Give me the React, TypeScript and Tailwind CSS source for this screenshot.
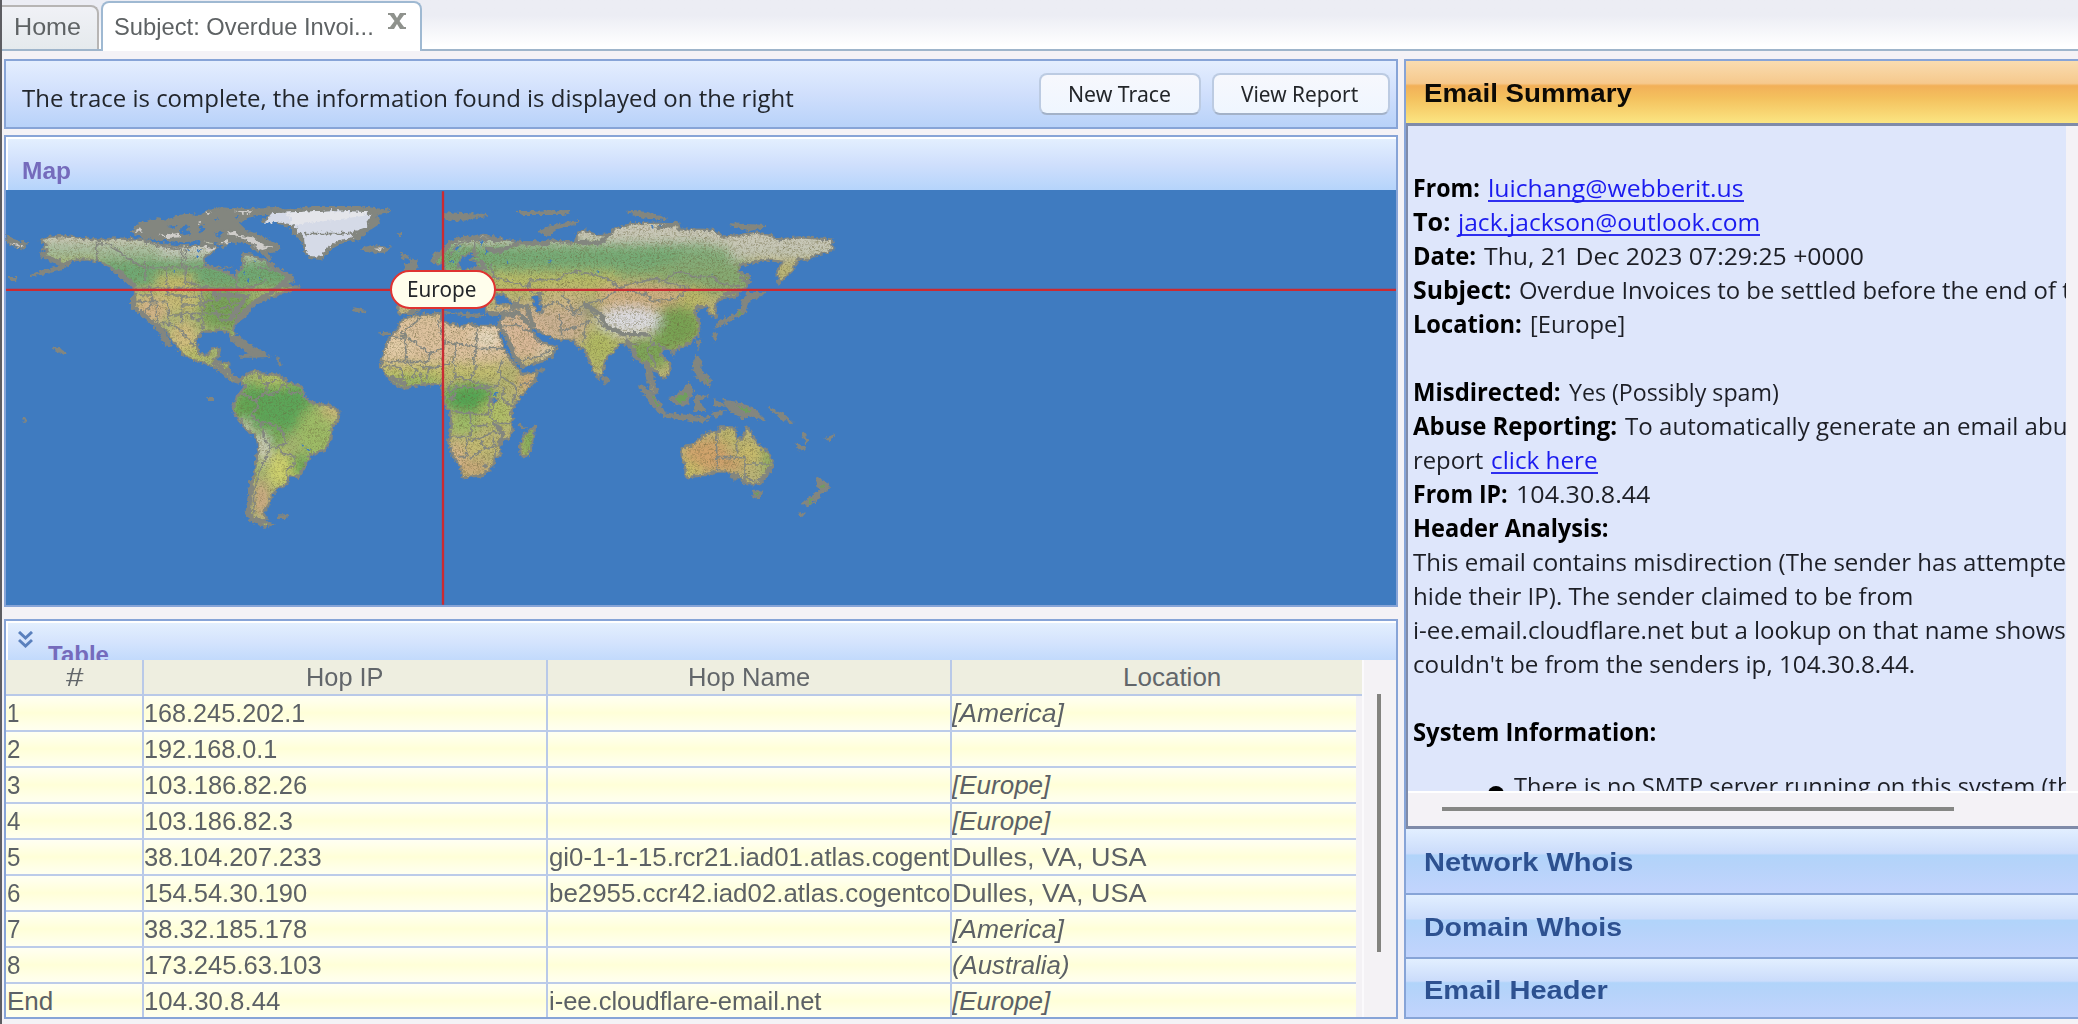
import { useLayoutEffect, useRef, useState } from "react";
import type { ReactNode } from "react";

/** Text on a single line, condensed or widened so that it spans exactly `w` pixels. */
function Fit({ w, className = "", children }: { w: number; className?: string; children: ReactNode }) {
  const ref = useRef<HTMLSpanElement>(null);
  const [scale, setScale] = useState(1);
  useLayoutEffect(() => {
    if (ref.current && ref.current.offsetWidth > 0) setScale(w / ref.current.offsetWidth);
  }, [w]);
  return (
    <span className={`block shrink-0 whitespace-pre ${className}`} style={{ width: w }}>
      <span ref={ref} className="inline-block origin-left" style={{ transform: `scaleX(${scale})` }}>
        {children}
      </span>
    </span>
  );
}

const AMERICAS = [
  "M120,180L150,170L190,168L260,175L300,180L350,175L400,178L430,180L470,190L500,195L540,200L600,195L615,180L635,185L650,205L612,235L612,252L640,265L690,280L708,297L715,275L728,262L730,222L760,225L775,235L800,245L830,262L840,275L870,285L880,305L850,318L898,320L845,340L800,355L778,365L750,385L740,405L712,425L700,440L705,470L705,485L692,475L685,455L660,448L640,455L610,455L590,475L588,495L600,522L625,525L635,508L660,505L655,530L640,540L665,548L688,550L685,580L700,595L720,600L715,608L690,600L668,578L640,560L610,548L580,540L545,520L530,498L515,480L500,455L480,440L500,480L508,498L495,490L475,450L460,430L430,405L405,380L405,330L390,310L375,298L350,280L330,260L290,243L260,238L220,240L185,252L170,250L150,235L125,230L145,215L125,205L140,195Z",
  "M720,600L745,580L765,572L785,580L835,585L860,605L905,620L915,655L950,672L990,675L1018,695L1015,720L995,745L990,785L975,808L930,825L920,850L895,890L865,890L862,912L835,925L815,945L808,970L790,1000L800,1015L780,1020L820,1032L795,1040L760,1025L740,1010L742,975L755,920L765,870L775,800L770,770L740,750L715,715L698,688L710,650L735,620Z",
];

const OLD_WORLD = [
  "M62,470L85,445L85,435L105,415L140,405L200,402L217,405L215,425L240,432L280,440L295,430L320,438L385,438L392,450L385,455L400,500L415,530L440,560L455,582L500,578L498,600L470,630L440,665L425,690L428,745L420,770L390,790L392,825L375,832L370,855L340,885L300,890L278,892L270,860L250,830L235,785L245,740L240,700L225,670L218,640L215,615L180,612L150,615L110,622L90,622L60,600L32,560L40,515Z",
  "M495,740L490,780L475,828L452,828L450,800L462,765Z",
  "M388,430L400,405L440,395L470,420L485,455L510,485L530,490L560,500L545,530L510,545L460,562L445,540L425,500L400,460Z",
  "M185,245L190,225L215,215L240,190L265,172L310,170L340,165L400,180L440,185L500,190L540,180L620,190L620,160L640,150L680,165L720,165L735,145L790,130L860,128L925,130L925,148L1030,150L1060,170L1110,165L1160,158L1200,165L1220,178L1290,172L1385,178L1390,210L1340,225L1310,240L1285,235L1270,270L1225,310L1222,270L1240,245L1190,240L1160,245L1110,255L1105,275L1140,290L1130,320L1095,350L1050,355L1035,375L1040,410L1020,405L1010,378L975,385L975,400L990,430L985,465L950,495L910,510L880,505L870,520L900,550L902,575L880,595L860,575L840,565L835,590L860,640L850,640L832,600L825,550L805,540L795,510L770,495L750,490L745,500L705,540L700,570L685,598L670,570L655,535L645,510L625,500L610,480L560,478L530,465L490,445L470,430L445,400L400,405L350,396L345,372L130,372L150,300L225,300L225,250L200,250Z",
  "M85,375L150,378L145,395L105,402L85,400Z",
  "M935,805L975,790L1000,765L1035,752L1045,760L1050,742L1095,742L1100,770L1115,780L1130,740L1148,765L1160,790L1195,820L1210,850L1195,885L1170,912L1125,912L1115,895L1090,895L1075,875L1040,875L1000,885L948,893L945,855L935,830Z",
];

const NORTH_ISLANDS =
  "M670,160L700,150L760,160L800,180L832,195L835,210L800,215L812,242L780,215L760,205L745,190L720,185L690,185L670,200L655,190Z M395,155L420,130L470,118L500,122L540,108L560,104L600,108L630,92L660,85L700,88L830,84L850,92L800,98L740,112L715,130L735,150L690,150L640,155L660,185L600,180L550,184L500,180L440,175L410,162Z M1090,205L1120,198L1168,205L1150,215L1110,215Z M690,470L722,472L745,495L805,528L765,530L720,530L755,520L705,492Z M835,532L842,558L835,550Z M835,1006L862,1006L860,1014L838,1014Z M20,165L40,180L80,192L70,205L25,190Z M90,285L150,268L215,246L185,265L140,280Z M30,294L48,294L46,300L32,300Z M156,503L180,508L198,522L185,518Z M625,654L636,654L636,660L626,660Z M1195,160L1205,163L1198,167Z M1062,385L1092,392L1080,396Z M72,712L78,722L74,722Z";

const EAST_ISLANDS =
  "M105,255L125,250L118,235L140,245L135,272L108,270Z M95,222L110,232L100,236Z M1040,440L1055,418L1095,405L1115,385L1118,362L1130,348L1130,332L1150,340L1188,338L1145,358L1130,370L1125,400L1100,410L1065,430Z M808,618L830,625L870,670L885,700L865,695L835,655Z M878,700L950,708L1000,715L1025,708L1000,725L950,718L885,710Z M902,655L930,640L955,612L970,630L950,675L915,670Z M975,648L1008,650L988,662L1002,690L976,690Z M980,528L994,545L990,570L1022,598L1015,618L985,596L970,565Z M1060,662L1100,668L1150,685L1185,722L1140,705L1120,712L1080,690Z M697,588L717,600L705,612Z M1198,682L1240,703L1268,730L1235,715Z M1150,932L1176,935L1165,955L1150,948Z M1340,893L1378,915L1370,932L1348,935Z M1350,935L1345,955L1312,978L1298,970L1325,950Z M222,100L350,105L300,115L265,122L225,115Z M450,96L600,93L580,102L460,102Z M508,155L545,138L628,126L560,145L535,165Z M770,95L830,98L892,118L820,112Z M1080,133L1190,138L1130,152Z M1296,755L1315,785L1308,786Z M1282,795L1305,800L1295,810Z M1370,775L1390,767L1380,780Z M905,512L916,512L908,526Z M980,480L990,482L984,500Z M1030,460L1040,462L1034,478Z M1290,1000L1300,1003L1294,1010Z M500,568L525,568L512,574Z M445,732L465,744L455,744Z M25,460L60,458L50,464Z M1035,660L1035,680L1060,675Z M1030,700L1060,695L1040,712Z M195,396L285,402L345,405L300,410L240,398Z";

const AMERICAN_BORDERS =
  "M290,178V243 M290,190L330,195L370,225L400,245L430,262 M430,180L460,195L545,208V262 M430,262H700 M435,240V300 M500,262V318 M556,205V318 M556,300L600,318L640,325L715,325L760,320L800,300 M710,270V325 M770,262L835,272 M405,325H620 M455,325V365 M405,365H500 M500,325V345 M500,345H545V400H600 M545,350H600V385 M545,375H610 M470,365V430 M505,365V435 M455,430H510L540,450L570,480L580,500 M505,405H545 M545,400V430 M575,400L580,418L605,420 M600,325L615,370L605,400L610,450 M605,370L640,360 M610,400L720,405 M635,375L660,420L690,420 M640,340L650,360L680,340L690,370L740,370 M660,385L690,380L700,400 M430,405L455,370 M420,345H455 M720,640L765,660L780,650L800,640L800,605 M780,645L830,640L850,610 M860,610L870,640L910,640 M765,660L775,680L755,700L760,715L785,730L800,725L845,750L860,790L830,800L810,805 M785,730L790,770L800,785L810,805L795,840L775,880L765,930L760,1010 M830,800L850,820L885,830L880,860L860,865V888 M770,575L790,610L830,600";

const OLD_BORDERS =
  "M62,470L105,475L110,545H45 M105,475L95,455L140,425L150,408 M95,460L180,520L175,545L110,545 M180,520L218,505L225,490L205,430L215,405 M225,490L255,490L320,500V438 M320,505H400 M255,490L260,510L250,545L255,590L300,600L320,560L310,540L320,500 M250,545L215,560L175,565L170,600 M110,545L140,570L125,600 M150,575L155,610 M40,560L90,560L100,600 M180,565L150,560 M255,590L235,620L240,640L260,620L350,625L360,640L355,700L330,705L300,700L245,695 M300,600L350,620L380,620L395,590L385,570L400,540 M395,590L440,620L495,600 M400,620L398,660L430,680 M440,620L430,670 M360,640L370,680L360,710L390,730H425 M245,770H300L305,740L355,735 M300,700L305,740 M290,775L290,830H265 M290,780L330,775L370,755L395,765 M330,780L345,805L300,835 M345,805L375,800V830 M370,770L375,800 M345,850L352,856L342,862Z M400,410L385,440 M400,440L440,435L490,460 M420,420L440,410 M440,555L450,540L510,530L540,510 M470,320L480,300L570,298L580,285L620,275L680,285L730,305L745,325 M480,300L475,330L520,345 M575,345L600,370L610,400L650,370L700,360L740,330 M520,380L560,365L610,400 M745,325L790,310L860,295L880,305L910,280L935,275L970,290L1030,290L1050,310L1110,320 M745,325L830,345L850,365L920,355L960,325L880,305 M360,250L370,290L440,310L470,320 M320,170L310,215L335,245 M240,225L265,190L310,180 M570,400L575,470 M575,450L610,445L660,420 M610,405L640,400 M660,420L645,440L640,490 M660,390L700,440L750,460L830,460L850,490L830,510L860,560 M770,470V495L800,490 M850,490L880,500 M380,400L440,385L450,350 M440,370L490,375 M1040,755V870 M1040,833H1125V910 M1100,770V833 M1125,852H1205 M1125,890L1150,902L1185,900";

function WorldMap() {
  return (
    <svg viewBox="12 30 4182 1248" className="block h-full w-full" aria-label="World map">
      <defs>
        <filter id="coast" x="0" y="0" width="100%" height="100%" colorInterpolationFilters="sRGB">
          <feTurbulence type="fractalNoise" baseFrequency="0.09" numOctaves="2" seed="7" result="n" />
          <feDisplacementMap in="SourceGraphic" in2="n" scale="18" xChannelSelector="R" yChannelSelector="G" />
        </filter>
        <filter id="soft" x="-40%" y="-40%" width="180%" height="180%">
          <feGaussianBlur stdDeviation="16" />
        </filter>
        <filter id="speckle" x="0" y="0" width="100%" height="100%" colorInterpolationFilters="sRGB">
          <feTurbulence type="fractalNoise" baseFrequency="0.2" numOctaves="2" seed="3" />
          <feColorMatrix values="0 0 0 0 0.42  0 0 0 0 0.4  0 0 0 0 0.25  0 2.2 0 0 -1" />
        </filter>
        <clipPath id="americas">
          {AMERICAS.map((d) => <path key={d} d={d} />)}
        </clipPath>
        <clipPath id="oldworld">
          {OLD_WORLD.map((d) => <path key={d} d={d} />)}
        </clipPath>
      </defs>

      <g filter="url(#coast)">
        <g clipPath="url(#americas)">
          <rect x="0" y="100" width="1100" height="960" fill="#a4b472" />
          <g filter="url(#soft)">
            <rect x="90" y="140" width="800" height="50" fill="#ccc8b8" />
            <rect x="90" y="190" width="800" height="45" fill="#a5bc9d" />
            <rect x="480" y="180" width="160" height="50" fill="#c8cbc0" />
            <rect x="720" y="215" width="80" height="45" fill="#cfccc0" />
            <rect x="300" y="238" width="600" height="85" fill="#6fa873" />
            <rect x="470" y="285" width="110" height="40" fill="#c8bd6c" />
            <rect x="400" y="335" width="200" height="60" fill="#c9bd77" />
            <ellipse cx="450" cy="395" rx="55" ry="40" fill="#d0b287" />
            <ellipse cx="680" cy="390" rx="85" ry="60" fill="#77a35a" />
            <ellipse cx="550" cy="470" rx="45" ry="50" fill="#d2bd80" />
            <ellipse cx="580" cy="525" rx="50" ry="20" fill="#b9bd69" />
            <ellipse cx="820" cy="680" rx="120" ry="85" fill="#5ba558" />
            <ellipse cx="735" cy="690" rx="40" ry="45" fill="#64a553" />
            <ellipse cx="950" cy="760" rx="60" ry="80" fill="#9dbb66" />
            <ellipse cx="1000" cy="690" rx="35" ry="30" fill="#c9b87a" />
            <ellipse cx="820" cy="600" rx="60" ry="20" fill="#b6c268" />
            <ellipse cx="820" cy="770" rx="35" ry="35" fill="#74aa56" />
            <ellipse cx="900" cy="860" rx="40" ry="35" fill="#6fa95a" />
            <ellipse cx="840" cy="870" rx="38" ry="55" fill="#ced06d" />
            <ellipse cx="785" cy="960" rx="25" ry="60" fill="#cfa984" />
            <ellipse cx="790" cy="800" rx="18" ry="45" fill="#d8d3cc" />
            <ellipse cx="735" cy="740" rx="20" ry="20" fill="#d3cfbf" />
          </g>
          <rect x="20" y="100" width="1100" height="950" filter="url(#speckle)" opacity="0.6" />
        </g>
        <g fill="none" stroke="#83867f" strokeWidth="7" strokeLinejoin="round">
          {AMERICAS.map((d) => <path key={d} d={d} />)}
          <path d={AMERICAN_BORDERS} strokeWidth="5" />
        </g>
        <path
          d="M400,345V380L480,445L510,500 M350,270L405,320 M640,545L715,602 M755,900L745,1005L790,1035 M800,250L870,290L850,310L800,345L745,380L710,425 M640,340L740,350L690,420 M120,220L180,250 M600,190L640,200"
          fill="none" stroke="#83867f" strokeWidth="14"
        />
        <path d={NORTH_ISLANDS} fill="#83867f" stroke="#83867f" strokeWidth="6" />
        <path
          d="M400,155L420,142L428,155Z M470,160L500,165L530,160L545,172L500,174Z M680,158L700,153L720,168L760,172L790,195L820,200L780,212L760,192L730,176Z M615,98L632,97L625,106Z M700,92L760,94L740,100Z M1120,206L1150,205L1140,212Z M25,190L70,196L65,202Z M610,200L650,205L625,215Z M660,190L680,178L690,190Z M590,128L605,126L600,134Z"
          fill="#cfcdca"
        />
        <path
          d="M700,112L720,108L715,118Z M540,150L550,138L570,135L560,150L575,160L560,168L545,162Z M600,140L612,132L608,160L595,165Z M500,140L530,138L525,146Z M640,118L655,112L650,122Z"
          fill="#3f7bc0"
        />
        <path d="M780,88L860,90L940,80L1080,80L1175,92L1130,105L1138,130L1100,155L1080,178L1030,185L995,205L965,238L935,235L915,220L910,190L880,160L870,140L820,125L785,125L810,105Z" fill="#83867f" stroke="#83867f" strokeWidth="4" />
        <path d="M815,100L960,93L1000,90L1100,97L1112,108L1100,125L1102,140L1050,158L1060,172L1010,182L980,205L960,230L925,228L918,200L915,175L895,155L880,135L840,125L795,128Z" fill="#d5dae7" />
        <path d="M880,135L1000,120L1090,108L1100,97L960,93L860,98Z" fill="#e4e5ea" />
        <path d="M915,161H1080" stroke="#83867f" strokeWidth="5" />
        <path
          d="M560,205L570,208L562,216Z M590,210L606,208L600,218Z M585,225L598,222L592,234Z M520,270L528,272L522,280Z M740,300L748,298L745,310Z M780,290L786,292L780,300Z M905,790L915,795L908,800Z M918,805L930,808L925,814Z M760,240L768,244L762,250Z M730,275L736,277L732,284Z"
          fill="#3f7bc0"
        />
      </g>

      <g transform="translate(1110 0)" filter="url(#coast)">
        <g clipPath="url(#oldworld)">
          <rect x="0" y="90" width="1420" height="880" fill="#b9b377" />
          <g filter="url(#soft)">
            <rect x="160" y="100" width="1260" height="100" fill="#c9c7b8" />
            <rect x="160" y="190" width="860" height="90" fill="#76ab76" />
            <ellipse cx="1020" cy="235" rx="100" ry="38" fill="#83ae7c" />
            <rect x="1080" y="195" width="320" height="45" fill="#c3c5b4" />
            <rect x="870" y="250" width="280" height="90" fill="#86a972" />
            <rect x="370" y="275" width="370" height="60" fill="#b9bc68" />
            <rect x="740" y="275" width="160" height="25" fill="#93ad6e" />
            <rect x="380" y="375" width="270" height="110" fill="#cbb193" />
            <rect x="520" y="330" width="120" height="50" fill="#cbb884" />
            <rect x="690" y="318" width="250" height="70" fill="#cfb083" />
            <ellipse cx="920" cy="440" rx="75" ry="65" fill="#78a253" />
            <ellipse cx="778" cy="422" rx="95" ry="42" fill="#dcdbe0" />
            <ellipse cx="970" cy="350" rx="45" ry="30" fill="#bdb967" />
            <ellipse cx="690" cy="500" rx="55" ry="60" fill="#b1b963" />
            <ellipse cx="830" cy="520" rx="80" ry="45" fill="#7da558" />
            <ellipse cx="650" cy="390" rx="30" ry="20" fill="#969a80" />
            <ellipse cx="460" cy="480" rx="75" ry="60" fill="#d9b898" />
            <ellipse cx="530" cy="520" rx="25" ry="20" fill="#e3d3bb" />
            <rect x="20" y="400" width="380" height="150" fill="#ddc19e" />
            <ellipse cx="350" cy="475" rx="40" ry="30" fill="#e7dac1" />
            <ellipse cx="80" cy="500" rx="50" ry="25" fill="#e5cfaa" />
            <rect x="20" y="555" width="370" height="35" fill="#c3c16c" />
            <ellipse cx="120" cy="608" rx="100" ry="18" fill="#8bb35e" />
            <ellipse cx="300" cy="655" rx="80" ry="45" fill="#55a553" />
            <ellipse cx="430" cy="600" rx="45" ry="30" fill="#b4b56f" />
            <ellipse cx="475" cy="605" rx="35" ry="30" fill="#d0aa7e" />
            <ellipse cx="380" cy="700" rx="50" ry="45" fill="#b0bf68" />
            <ellipse cx="280" cy="735" rx="50" ry="30" fill="#9cbc66" />
            <ellipse cx="320" cy="800" rx="60" ry="25" fill="#c5bc72" />
            <ellipse cx="260" cy="830" rx="28" ry="45" fill="#d8b68b" />
            <ellipse cx="310" cy="865" rx="50" ry="25" fill="#cba97a" />
            <ellipse cx="480" cy="780" rx="30" ry="55" fill="#85ad5c" />
            <ellipse cx="1010" cy="825" rx="70" ry="50" fill="#d0a36c" />
            <ellipse cx="960" cy="870" rx="30" ry="25" fill="#c9c067" />
            <ellipse cx="1080" cy="770" rx="30" ry="25" fill="#c0b86c" />
            <ellipse cx="1080" cy="855" rx="45" ry="20" fill="#cd9e6b" />
            <ellipse cx="1140" cy="820" rx="35" ry="30" fill="#c9bb6b" />
            <ellipse cx="1195" cy="840" rx="15" ry="45" fill="#7fa95c" />
          </g>
          <rect x="0" y="90" width="1420" height="880" filter="url(#speckle)" opacity="0.7" />
        </g>
        <g fill="#3f7bc0" stroke="#83867f" strokeWidth="5">
          <path d="M375,345L400,340L420,362L440,372L400,375L375,368Z" />
          <path d="M485,352L510,345L512,370L520,395L505,400L492,380Z" />
          <path d="M275,230L300,218L320,222L300,240L325,245L320,262L280,272L262,260Z" />
          <path d="M360,655L385,655L380,668L362,668Z" />
        </g>
        <g fill="none" stroke="#83867f" strokeWidth="7" strokeLinejoin="round">
          {OLD_WORLD.map((d) => <path key={d} d={d} />)}
          <path d={OLD_BORDERS} strokeWidth="5" />
        </g>
        <path
          d="M190,245L240,190L270,175L390,180 M330,240L345,265L300,270 M345,205L385,215L440,190L540,190 M620,185L690,190L720,160 M640,370L690,400L710,440L760,462L830,463 M405,455L440,545 M420,380L470,380L490,440 M770,480L800,540 M830,540L860,640 M1060,345L1110,330 M1110,290L1140,310 M975,385L1000,380 M60,590L110,615 M370,730L400,760L385,800 M1170,905L1205,860 M1080,885L1110,885 M260,640L240,660 M150,390L110,398 M355,400L440,405 M925,130L860,145"
          fill="none" stroke="#83867f" strokeWidth="13"
        />
        <path d={EAST_ISLANDS} fill="#83867f" stroke="#83867f" strokeWidth="6" />
        <path
          d="M840,640L870,678L862,680Z M912,658L945,640L955,650L935,668Z M1095,675L1150,692L1130,700Z M1108,395L1118,398L1105,405Z M1352,915L1368,918L1355,925Z M1312,965L1330,955L1322,968Z M1155,938L1168,940L1160,948Z M1005,595L1016,600L1010,606Z"
          fill="#6f9f5c"
        />
        <path
          d="M255,205L275,195L262,212Z M330,180L340,190L332,200Z M345,205L355,215L345,222Z M240,240L252,242L245,252Z M410,240L420,250L412,252Z M535,243L545,245L536,250Z M680,272L688,278L680,280Z M840,135L855,142L848,146Z M865,136L880,136L870,140Z M1025,280L1032,282L1026,286Z M380,380L386,384L380,388Z M370,638L388,640L375,645Z M290,260L305,255L300,268Z"
          fill="#3f7bc0"
        />
      </g>

      <path d="M18,329.500H4188 M1329,34V1274" fill="none" stroke="#cb2a31" strokeWidth="7" />
    </svg>
  );
}

const HOPS: { n: string; nw: number; ip: string; ipw: number; name?: string; namew?: number; loc?: string; locw?: number; plain?: boolean }[] = [
  { n: "1", nw: 12, ip: "168.245.202.1", ipw: 161, loc: "[America]", locw: 112 },
  { n: "2", nw: 13, ip: "192.168.0.1", ipw: 133 },
  { n: "3", nw: 13, ip: "103.186.82.26", ipw: 163, loc: "[Europe]", locw: 98 },
  { n: "4", nw: 13, ip: "103.186.82.3", ipw: 149, loc: "[Europe]", locw: 98 },
  { n: "5", nw: 13, ip: "38.104.207.233", ipw: 178, name: "gi0-1-1-15.rcr21.iad01.atlas.cogent", namew: 400, loc: "Dulles, VA, USA", locw: 194, plain: true },
  { n: "6", nw: 13, ip: "154.54.30.190", ipw: 163, name: "be2955.ccr42.iad02.atlas.cogentco", namew: 401, loc: "Dulles, VA, USA", locw: 194, plain: true },
  { n: "7", nw: 13, ip: "38.32.185.178", ipw: 163, loc: "[America]", locw: 112 },
  { n: "8", nw: 13, ip: "173.245.63.103", ipw: 178, loc: "(Australia)", locw: 117 },
  { n: "End", nw: 46, ip: "104.30.8.44", ipw: 136, name: "i-ee.cloudflare-email.net", namew: 272, loc: "[Europe]", locw: 98 },
];

const COLS = "grid grid-cols-[138px_404px_404px_1fr]";

function HopTable() {
  return (
    <div className="flex h-[357px] bg-[#f4f2f5] font-['Liberation_Sans',sans-serif] text-[26px] text-[#5c6166]">
      <div className="w-[1356px] shrink-0">
        <div className={`${COLS} h-[36px] border-b-2 border-[#b9c9e8] bg-[#eeeee0] leading-[34px] text-[#62666a]`}>
          <div className="flex justify-center border-r-2 border-[#b9c9e8]"><Fit w={17}>#</Fit></div>
          <div className="flex justify-center border-r-2 border-[#b9c9e8]"><Fit w={78}>Hop IP</Fit></div>
          <div className="flex justify-center border-r-2 border-[#b9c9e8]"><Fit w={122}>Hop Name</Fit></div>
          <div className="flex justify-center pl-[30px]"><Fit w={98}>Location</Fit></div>
        </div>
        <div className="w-[1350px]">
          {HOPS.map((h) => (
            <div
              key={h.n}
              className={`${COLS} h-[36px] border-b-2 border-[#bccbe9] bg-linear-to-b from-[#fffff2] via-[#ffffd8] to-[#fffff0] leading-[35px] last:h-[34px] last:border-b-0`}
            >
              <div className="overflow-hidden border-r-2 border-[#b9c9e8] pl-px"><Fit w={h.nw}>{h.n}</Fit></div>
              <div className="overflow-hidden border-r-2 border-[#b9c9e8]"><Fit w={h.ipw}>{h.ip}</Fit></div>
              <div className="overflow-hidden border-r-2 border-[#b9c9e8] pl-px">{h.name && <Fit w={h.namew!}>{h.name}</Fit>}</div>
              <div className="overflow-hidden">{h.loc && <Fit w={h.locw!} className={h.plain ? "" : "italic"}>{h.loc}</Fit>}</div>
            </div>
          ))}
        </div>
      </div>
      <div className="flex flex-1 justify-center border-l-2 border-[#fbfafc] pt-[34px]">
        <div className="mr-0.5 h-[258px] w-1 bg-[#83837f]" />
      </div>
    </div>
  );
}

function Line({ children }: { children?: ReactNode }) {
  return <div className="flex h-[34px] gap-[8px] leading-[34px]">{children}</div>;
}

function EmailBody() {
  const link = "text-[#1b1bef] border-b-2 border-[#2f2ff0] h-[31px]";
  return (
    <div className="h-[665px] w-[658px] shrink-0 overflow-hidden bg-[#dee6fb] pt-[45px] pl-[5px] font-['Open_Sans',sans-serif] text-[24.500px] text-[#1d1f26]">
      <Line><Fit w={67} className="font-bold text-black">From:</Fit><Fit w={256} className={link}>luichang@webberit.us</Fit></Line>
      <Line><Fit w={37} className="font-bold text-black">To:</Fit><Fit w={302} className={link}>jack.jackson@outlook.com</Fit></Line>
      <Line><Fit w={63} className="font-bold text-black">Date:</Fit><Fit w={380}>Thu, 21 Dec 2023 07:29:25 +0000</Fit></Line>
      <Line><Fit w={98} className="font-bold text-black">Subject:</Fit><Fit w={580}>Overdue Invoices to be settled before the end of the</Fit></Line>
      <Line><Fit w={109} className="font-bold text-black">Location:</Fit><Fit w={95}>[Europe]</Fit></Line>
      <Line />
      <Line><Fit w={148} className="font-bold text-black">Misdirected:</Fit><Fit w={210}>Yes (Possibly spam)</Fit></Line>
      <Line><Fit w={204} className="font-bold text-black">Abuse Reporting:</Fit><Fit w={467}>To automatically generate an email abuse</Fit></Line>
      <Line><Fit w={70}>report</Fit><Fit w={107} className={link}>click here</Fit></Line>
      <Line><Fit w={95} className="font-bold text-black">From IP:</Fit><Fit w={134}>104.30.8.44</Fit></Line>
      <Line><Fit w={196} className="font-bold text-black">Header Analysis:</Fit></Line>
      <Line><Fit w={653}>This email contains misdirection (The sender has attempte</Fit></Line>
      <Line><Fit w={500}>hide their IP). The sender claimed to be from</Fit></Line>
      <Line><Fit w={653}>i-ee.email.cloudflare.net but a lookup on that name shows</Fit></Line>
      <Line><Fit w={502}>couldn&apos;t be from the senders ip, 104.30.8.44.</Fit></Line>
      <Line />
      <Line><Fit w={243} className="font-bold text-black">System Information:</Fit></Line>
      <div className="mt-[20px] flex gap-[10px] pl-[75px] leading-[34px]">
        <span className="mt-[17px] h-[16px] w-[16px] shrink-0 rounded-full bg-black" />
        <Fit w={571}>There is no SMTP server running on this system (the</Fit>
      </div>
    </div>
  );
}

function Section({ title, w, className }: { title: string; w: number; className: string }) {
  return (
    <div className={`flex shrink-0 items-center bg-[linear-gradient(#e2efff,#cbdcfb_38%,#b1d4fa_41%,#b5d3fa_55%,#c2d4fd)] pl-[18px] text-[26.500px] leading-[30px] font-bold text-[#2d5190] ${className}`}>
      <Fit w={w}>{title}</Fit>
    </div>
  );
}

export default function App() {
  return (
    <div className="flex h-[1024px] w-[2078px] flex-col overflow-hidden border-l-2 border-[#5d5d62] bg-[#f4f2f6] font-['Liberation_Sans',sans-serif]">
      <div className="flex h-[51px] shrink-0 items-end bg-linear-to-b from-[#ecedf4] from-30% to-white to-90%">
        <div className="flex h-[46px] w-[97px] shrink-0 border-b-2 border-[#9fb5cb]">
          <div className="flex-1 rounded-tr-lg border-t-2 border-r-2 border-[#b7b5b4] bg-linear-to-b from-[#f0f1f6] to-[#e5eaed] pl-[12px] text-[24px] leading-[39px] text-[#5e6264]">
            <Fit w={67}>Home</Fit>
          </div>
        </div>
        <div className="h-full w-[2px] shrink-0 border-b-2 border-[#9fb5cb]" />
        <div className="flex h-[50px] w-[321px] shrink-0 rounded-t-lg border-2 border-b-0 border-[#9fb9d2] bg-white pl-[11px] text-[24px] leading-[47px] text-[#5e6264]">
          <Fit w={260}>Subject: Overdue Invoi...</Fit>
          <svg viewBox="0 0 18 16" className="mt-[10px] ml-[14px] h-[16px] w-[18px]" aria-label="Close">
            <path d="M0,0H6L9,5L12,0H18V2H16L11.500,8L16,14H18V16H12L9,11L6,16H0V14H2L6.500,8L2,2H0Z" fill="#8f928d" />
          </svg>
        </div>
        <div className="h-full flex-1 border-b-2 border-[#9fb5cb]" />
      </div>

      <div className="flex flex-1 gap-[6px] pt-[8px] pl-[2px]">
        <div className="flex w-[1394px] shrink-0 flex-col">
          <div className="flex h-[70px] shrink-0 gap-[11px] border-2 border-[#87a4d7] bg-linear-to-b from-[#e4eefe] via-[#d0dffc] to-[#b8d2f9] pt-[12px] pr-[6px] pl-[16px]">
            <div className="flex-1 pt-[8px] font-['Open_Sans',sans-serif] text-[24.500px] leading-[34px] text-[#22262c]">
              <Fit w={772}>The trace is complete, the information found is displayed on the right</Fit>
            </div>
            <button className="flex h-[42px] w-[162px] justify-center rounded-lg border-2 border-[#bccbe2] border-b-[#a3b2c8] bg-linear-to-b from-[#f7f8fd] to-[#eff6ff] pr-[2px] font-['Noto_Sans',sans-serif] text-[21px] leading-[38px] text-[#23262a]">
              <Fit w={103}>New Trace</Fit>
            </button>
            <button className="flex h-[42px] w-[178px] justify-center rounded-lg border-2 border-[#bccbe2] border-b-[#a3b2c8] bg-linear-to-b from-[#f7f8fd] to-[#eff6ff] pr-[3px] font-['Noto_Sans',sans-serif] text-[21px] leading-[38px] text-[#23262a]">
              <Fit w={117}>View Report</Fit>
            </button>
          </div>

          <div className="relative mt-[6px] flex h-[472px] shrink-0 flex-col border-2 border-[#87a4d7] bg-[#3f7bc0]">
            <div className="h-[53px] shrink-0 border-t-2 border-l-2 border-white bg-linear-to-b from-[#e3effe] via-[#cfdffc] to-[#b5d4fb] pt-[15px] pl-[14px] text-[24px] leading-[33px] font-bold text-[#756bbc]">
              <Fit w={49}>Map</Fit>
            </div>
            <div className="-mx-0.5 h-[416px] shrink-0"><WorldMap /></div>
            <div className="absolute top-[133px] left-[384px] flex h-[39px] w-[106px] justify-center rounded-full border-2 border-[#df3331] bg-[#fffeec] pr-[4px] font-['Noto_Sans',sans-serif] text-[21px] leading-[35px] text-[#23262a]">
              <Fit w={69}>Europe</Fit>
            </div>
          </div>

          <div className="mt-[12px] h-[400px] shrink-0 overflow-hidden border-2 border-[#87a4d7]">
            <div className="flex h-[39px] gap-[15px] overflow-hidden border-t-2 border-l-2 border-white bg-linear-to-b from-[#e3effe] via-[#d5e4fd] to-[#c2dafc] pl-[10px] text-[24px] leading-[33px] font-bold text-[#756bbc]">
              <svg viewBox="0 0 15 17" className="mt-[8px] h-[17px] w-[15px]" aria-label="Collapse">
                <path d="M1,1L7.500,7L14,1 M1,9L7.500,15L14,9" fill="none" stroke="#5a80bd" strokeWidth="3" />
              </svg>
              <div className="pt-[15px]"><Fit w={61}>Table</Fit></div>
            </div>
            <HopTable />
          </div>
        </div>

        <div className="flex h-[960px] flex-1 flex-col border-2 border-r-0 border-[#87a4d7]">
          <div className="flex h-[62px] shrink-0 items-center bg-[linear-gradient(#f9dcb0,#f6c98d_36%,#f2b058_40%,#f4c15e_60%,#fbe582)] pt-[3px] pl-[18px] text-[26.500px] font-bold text-[#0c0a06]">
            <Fit w={208}>Email Summary</Fit>
          </div>
          <div className="flex h-[706px] shrink-0 flex-col border-y-3 border-l-2 border-[#7f8ba9] bg-[#f4f2f6]">
            <EmailBody />
            <div className="flex flex-1 border-t-2 border-white pt-[14px] pl-[34px]">
              <div className="h-[4px] w-[512px] bg-[#868785]" />
            </div>
          </div>
          <Section title="Network Whois" w={209} className="h-[64px] pt-[2px]" />
          <Section title="Domain Whois" w={198} className="h-[64px] border-t-2 border-[#87a4d7] pt-[2px]" />
          <Section title="Email Header" w={184} className="h-[60px] border-t-2 border-[#87a4d7] pt-[4px]" />
        </div>
      </div>
    </div>
  );
}
